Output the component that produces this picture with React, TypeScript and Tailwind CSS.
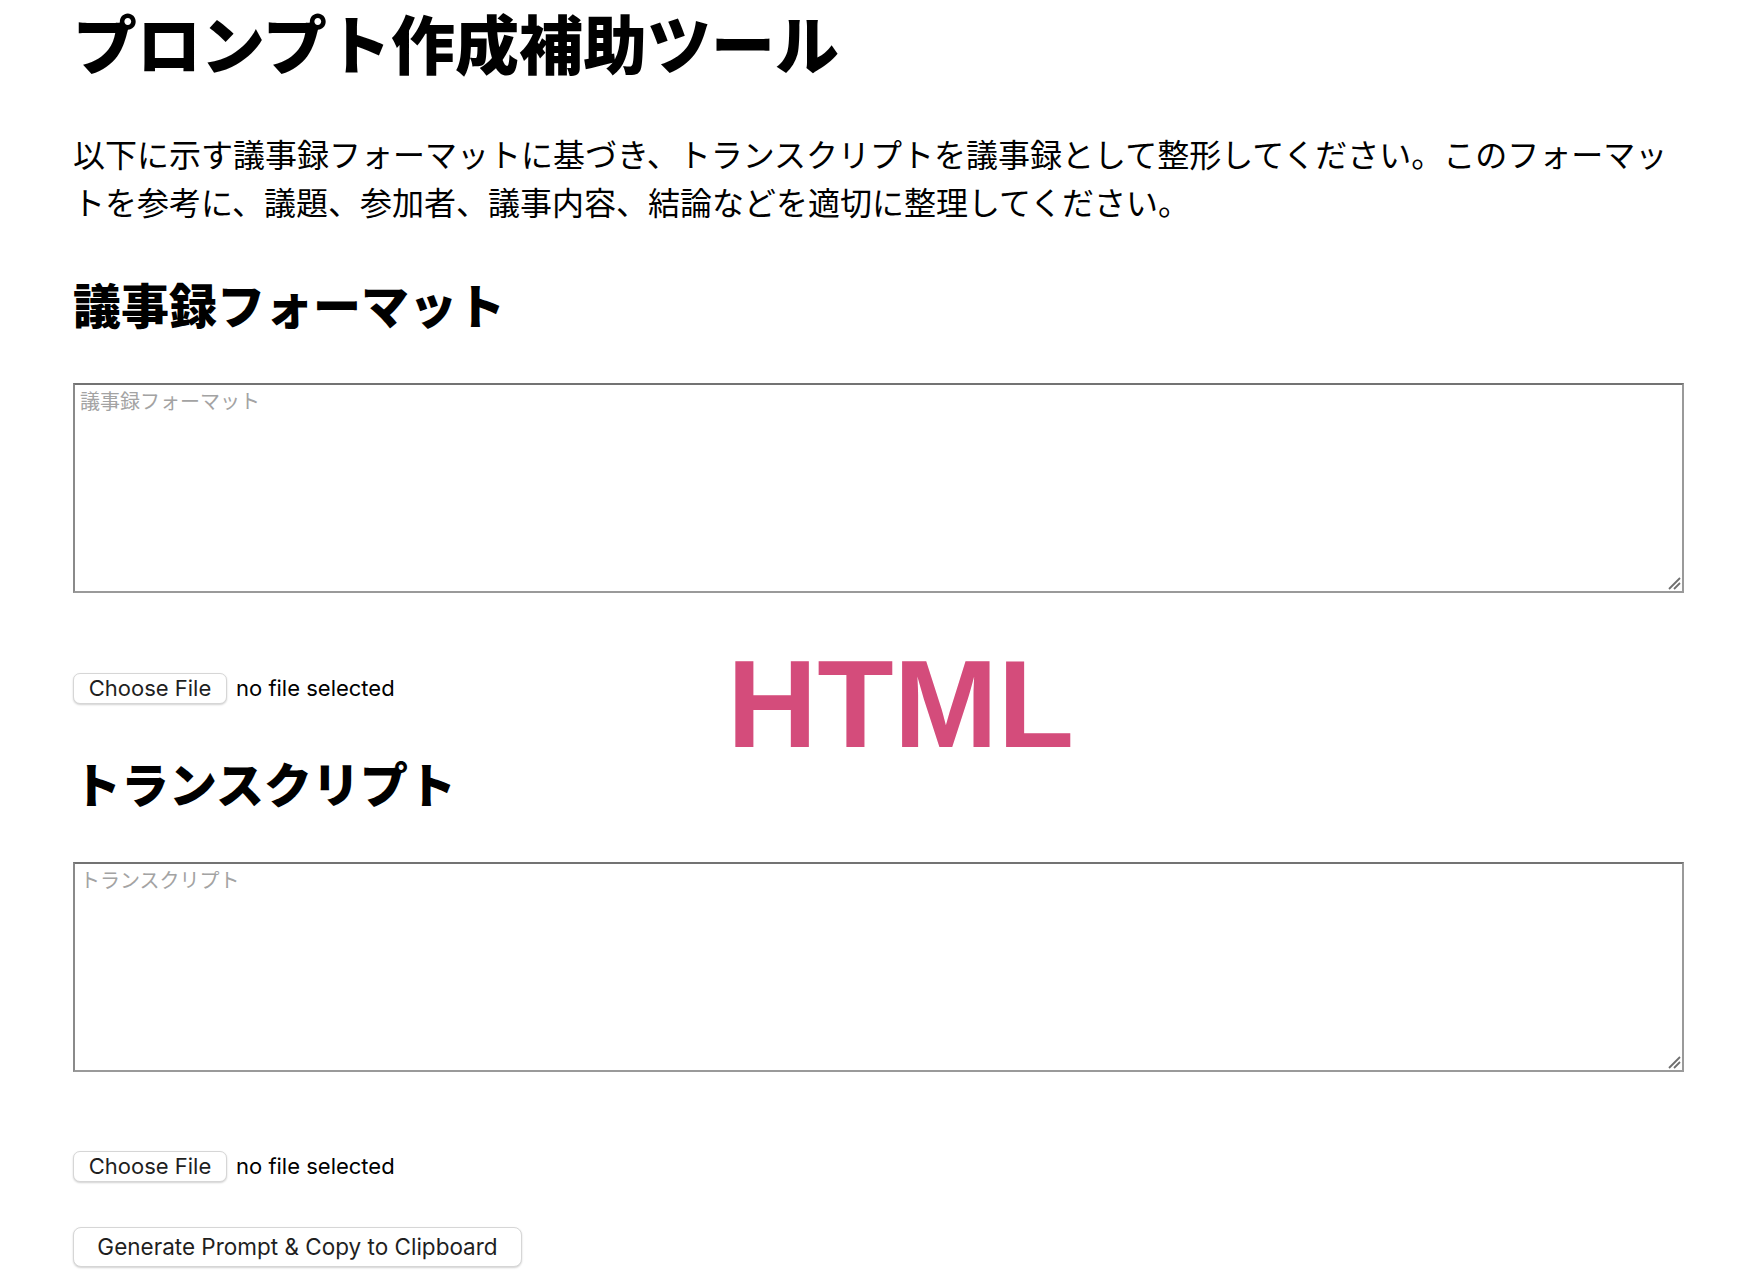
import React from "react";

const jp = { fontFamily: '"Noto Sans CJK JP", "Noto Sans", sans-serif' };
const ui = { fontFamily: 'Inter, "Liberation Sans", sans-serif' };

function FileRow() {
  return (
    <label className="flex h-[31px] items-center gap-[9px]" style={ui}>
      <input type="file" className="hidden" />
      <span className="flex h-[31px] w-[154px] items-center justify-center rounded-[7px] border border-[#d6d6d6] bg-white text-[22px] text-[#1f1f1f] shadow-[0_1px_2px_rgba(0,0,0,0.18)]">
        Choose File
      </span>
      <span className="text-[22px] text-black">no file selected</span>
    </label>
  );
}

function Area({ placeholder }: { placeholder: string }) {
  return (
    <div className="relative w-[1611px]">
      <textarea
        placeholder={placeholder}
        className="block h-[210px] w-[1611px] resize-none border-2 border-[#9a9a9a] border-t-[#737373] border-l-[#8a8a8a] bg-white px-[5px] py-[3px] text-[20px] leading-[1.3] placeholder:text-[#a3a3a3] outline-none"
        style={jp}
      />
      <svg
        className="pointer-events-none absolute bottom-[3px] right-[3px]"
        width="14"
        height="14"
        viewBox="0 0 14 14"
      >
        <line x1="2" y1="13" x2="13" y2="2" stroke="#6f6f6f" strokeWidth="1.8" />
        <line x1="7" y1="13" x2="13" y2="7" stroke="#6f6f6f" strokeWidth="1.8" />
      </svg>
    </div>
  );
}

export default function App() {
  return (
    <div className="relative h-[1282px] w-[1743px] overflow-hidden bg-white pl-[73px] text-black">
      <h1 className="mt-[1px] text-[64px] font-black leading-[80px]" style={jp}>
        プロンプト作成補助ツール
      </h1>
      <p className="mt-[49px] w-[1611px] text-[32px] leading-[47.5px]" style={jp}>
        以下に示す議事録フォーマットに基づき、トランスクリプトを議事録として整形してください。このフォーマットを参考に、議題、参加者、議事内容、結論などを適切に整理してください。
      </p>
      <h2 className="mt-[54px] text-[48px] font-black leading-[48px]" style={jp}>
        議事録フォーマット
      </h2>
      <div className="mt-[56px]">
        <Area placeholder="議事録フォーマット" />
      </div>
      <div className="mt-[80px]">
        <FileRow />
      </div>
      <h2 className="mt-[54px] text-[48px] font-black leading-[48px]" style={jp}>
        トランスクリプト
      </h2>
      <div className="mt-[56px]">
        <Area placeholder="トランスクリプト" />
      </div>
      <div className="mt-[79px]">
        <FileRow />
      </div>
      <div className="mt-[45px]">
        <button
          className="flex h-[40px] w-[449px] items-center justify-center rounded-[8px] border border-[#d6d6d6] bg-white text-[22.5px] text-[#1f1f1f] shadow-[0_1px_2px_rgba(0,0,0,0.18)]"
          style={ui}
        >
          Generate Prompt &amp; Copy to Clipboard
        </button>
      </div>
      <div
        className="pointer-events-none absolute left-[727px] top-[641px] text-[125px] font-bold leading-none text-[#d44c7b]"
        style={{ fontFamily: '"Liberation Sans", Arial, sans-serif' }}
      >
        HTML
      </div>
    </div>
  );
}
